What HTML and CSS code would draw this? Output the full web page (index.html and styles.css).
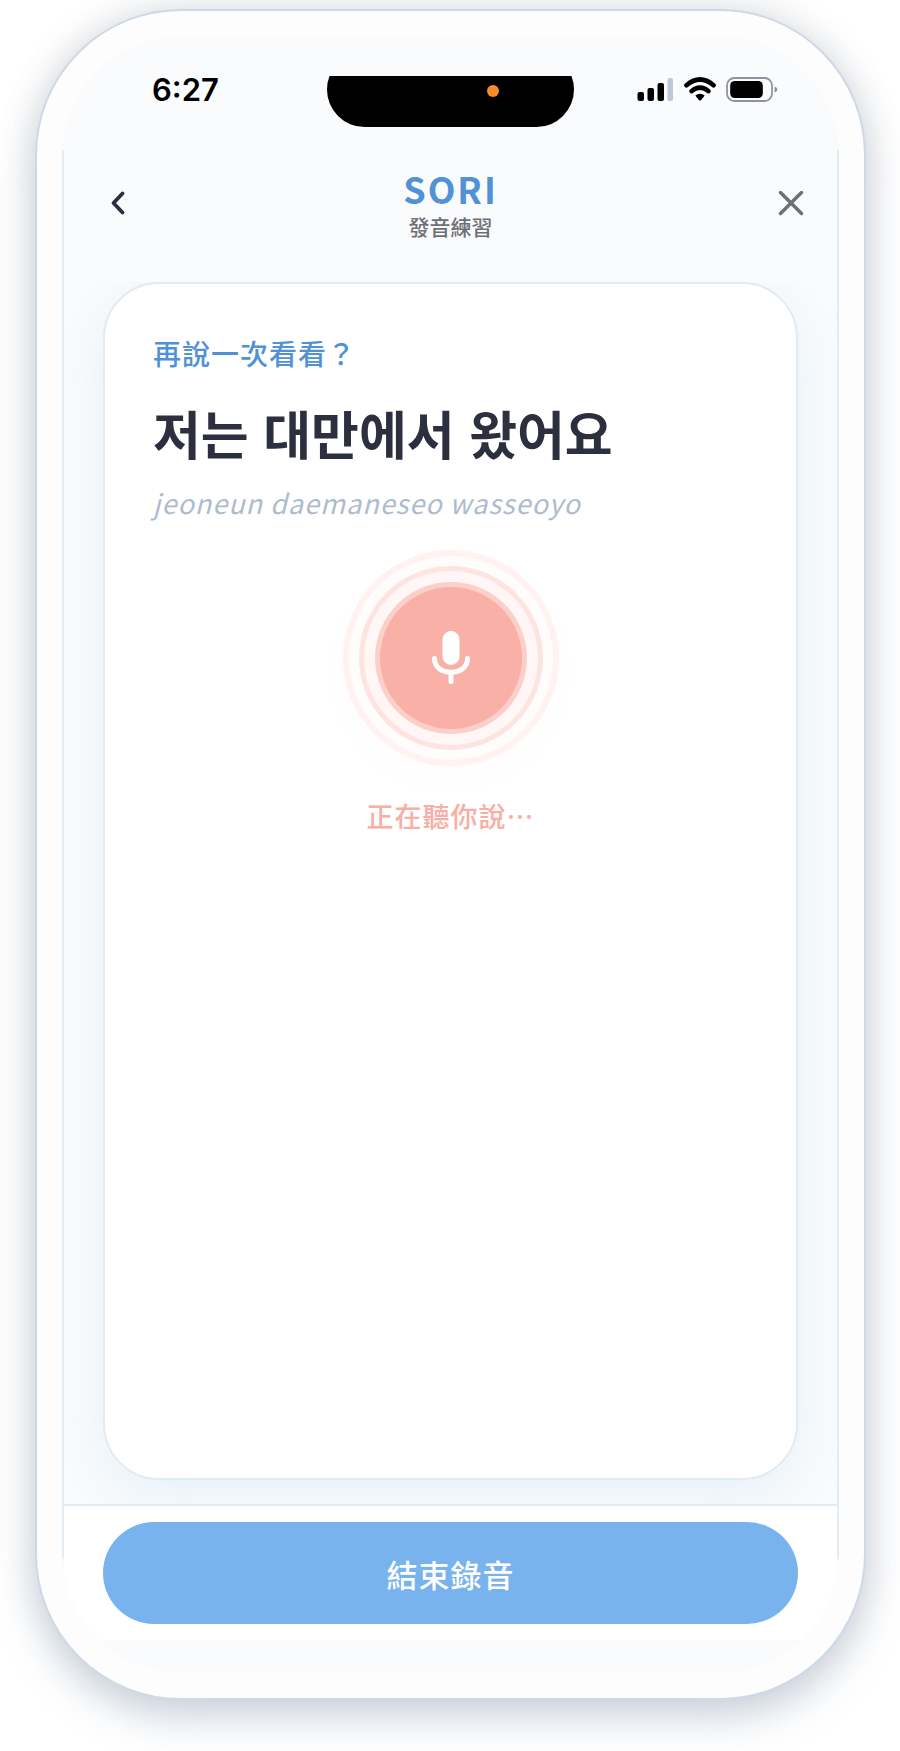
FILE: index.html
```
<!DOCTYPE html>
<html lang="zh-Hant">
	<head>
		<meta charset="UTF-8">
		<meta name="viewport" content="width=device-width, initial-scale=1">
		<title>SORI 發音練習</title>
		<link rel="stylesheet" href="styles.css">
	</head>
	<body>
		<div class="phone">
			<div class="screen">
				<div class="status-bar">
					<span class="time">6:27</span>
					<div class="island"><span class="dot"></span></div>
					<svg class="status-icons" width="142" height="28" viewBox="0 0 142 28" aria-hidden="true">
						<!-- signal -->
						<rect x="0.5" y="16" width="6.5" height="9" rx="2"/>
						<rect x="10.5" y="12" width="6.5" height="13" rx="2"/>
						<rect x="20.5" y="7" width="6.5" height="18" rx="2"/>
						<rect x="30.5" y="2" width="5.5" height="23" rx="2" fill="#bdc9d8"/>
						<!-- wifi -->
						<g fill="none" stroke="#000">
							<path d="M49.5 9.2 Q63 -2.2 76.5 9.2" stroke-width="4.6"/>
							<path d="M54.4 15.2 Q63 8 71.6 15.2" stroke-width="4.4"/>
						</g>
						<path d="M58.3 19.5 Q63 15.8 67.7 19.5 L64.2 23.9 Q63 25.3 61.8 23.9 Z"/>
						<!-- battery -->
						<rect x="90" y="2" width="45" height="23" rx="7.5" fill="none" stroke="#8e949e" stroke-width="1.8"/>
						<rect x="93.2" y="5" width="32.6" height="17" rx="4.5"/>
						<path d="M137.5 10.5 Q140.4 11.5 140.4 13.5 T137.5 16.5 Z" fill="#8e949e"/>
					</svg>
				</div>
				<header class="top-bar">
					<button class="icon-btn" type="button" aria-label="返回">
						<svg width="40" height="28" viewBox="0 0 40 28" fill="none"><path d="M32.5 4.5 L23.5 14 L32.5 23.5" stroke="#2b2f3e" stroke-width="3.8"/></svg>
					</button>
					<div class="brand">
						<h1>SORI</h1>
						<p>發音練習</p>
					</div>
					<button class="icon-btn" type="button" aria-label="關閉">
						<svg width="28" height="28" viewBox="0 0 28 28" fill="none"><path d="M3.5 3.5 L24.5 24.5 M24.5 3.5 L3.5 24.5" stroke="#6e6f76" stroke-width="3.5"/></svg>
					</button>
				</header>
				<main class="content">
					<section class="card">
						<p class="prompt">再說一次看看？</p>
						<h2 class="sentence" lang="ko">저는 대만에서 왔어요</h2>
						<p class="roman">jeoneun daemaneseo wasseoyo</p>
						<button class="mic" type="button" aria-label="錄音中">
							<svg width="40" height="56" viewBox="0 0 40 56" fill="none">
								<rect x="11.5" y="1" width="17" height="34" rx="8.5" fill="#fff"/>
								<path d="M3.5 28.5 C3.5 37.5 11 42.3 20 42.3 C29 42.3 36.5 37.5 36.5 28.5 M20 42.5 V51.5" stroke="#fff" stroke-width="5"/>
							</svg>
						</button>
						<p class="listening" role="status">正在聽你說⋯</p>
					</section>
				</main>
				<footer class="bottom-bar">
					<button class="stop-btn" type="button">結束錄音</button>
				</footer>
			</div>
		</div>
	</body>
</html>
```
FILE: styles.css
```
* {
	box-sizing: border-box;
}
body {
	margin: 0;
	min-height: 100vh;
	padding: 9px 34px 51px 35px;
	display: flex;
	background-color: #fff;
	font-family: "Noto Sans CJK TC", sans-serif;
	color: #2b2f3e;
}
h1, h2, p {
	margin: 0;
}
button {
	padding: 0;
	border: none;
	background: none;
	font-family: inherit;
	cursor: pointer;
}
svg path {
	stroke-linecap: round;
	stroke-linejoin: round;
}

/* 手機外框 */
.phone {
	flex: 1;
	display: flex;
	padding: 25px;
	border: 2px solid #cfd9e6;
	border-radius: 146px;
	background-color: #fdfdfd;
	box-shadow: 0 20px 40px rgba(130, 150, 180, 0.3), 0 0 36px rgba(90, 100, 110, 0.2);
}
/* 左右邊線只畫在直線部分 */
.screen {
	flex: 1;
	display: flex;
	flex-direction: column;
	padding: 40px 2px 33px;
	border-radius: 120px;
	background:
		linear-gradient(#e2ecf3, #e2ecf3) left center / 2px calc(100% - 228px) no-repeat,
		linear-gradient(#e2ecf3, #e2ecf3) right center / 2px calc(100% - 228px) no-repeat,
		#f9fbfd;
	overflow: hidden;
}

/* 狀態列 */
.status-bar {
	position: relative;
	display: flex;
	justify-content: space-between;
	height: 54px;
	padding: 0 58px 0 88px;
}
.time {
	font: 600 31px/28px Inter, sans-serif;
	color: #000;
}
.island {
	position: absolute;
	left: 50%;
	top: 0;
	width: 247px;
	height: 51px;
	margin-left: -124px;
	overflow: hidden;
}
.island::before {
	content: "";
	position: absolute;
	left: 0;
	right: 0;
	bottom: 0;
	height: 75px;
	border-radius: 38px;
	background-color: #000;
}
.island .dot {
	position: absolute;
	right: 75px;
	bottom: 30px;
	width: 12px;
	height: 12px;
	border-radius: 50%;
	background-color: #f68b2c;
}

/* 標題 */
.top-bar {
	display: flex;
	justify-content: space-between;
	align-items: center;
	height: 152px;
	padding: 0 26px 6px;
}
.icon-btn {
	display: flex;
	width: 40px;
	height: 40px;
	align-items: center;
	justify-content: center;
}
.brand {
	padding-top: 4px;
	text-align: center;
}
.brand h1 {
	font-size: 36px;
	line-height: 42px;
	font-weight: 700;
	letter-spacing: 2px;
	color: #5092d5;
}
.brand p {
	font-size: 21px;
	line-height: 35px;
	font-weight: 500;
	color: #6e6f76;
}

/* 卡片 */
.content {
	flex: 1;
	display: flex;
	padding: 0 39px 24px;
	overflow: hidden;
}
.card {
	flex: 1;
	display: flex;
	flex-direction: column;
	padding: 49px 48px;
	border: 2px solid #e1ebf3;
	border-radius: 56px;
	background-color: #fff;
	box-shadow: 0 16px 48px rgba(190, 220, 235, 0.28);
}
.prompt {
	font-size: 28px;
	line-height: 40px;
	font-weight: 500;
	letter-spacing: 1px;
	color: #5092d5;
}
.sentence {
	margin-top: 20px;
	font-family: "Noto Sans CJK KR", sans-serif;
	font-size: 52px;
	line-height: 80px;
	font-weight: 700;
}
.roman {
	margin-top: 8px;
	font-size: 27px;
	line-height: 44px;
	font-style: italic;
	letter-spacing: 1px;
	color: #adbccd;
}
.mic {
	display: flex;
	align-items: center;
	justify-content: center;
	align-self: center;
	width: 142px;
	height: 142px;
	margin-top: 62px;
	border-radius: 50%;
	background-color: #f9b0a6;
	box-shadow:
		0 0 0 5px #fcd0ca,
		0 0 0 16px #fff6f5,
		0 0 0 21px #fde4e0,
		0 0 0 31px #fffcfc,
		0 0 0 37px #fff2f1,
		0 14px 44px 10px rgba(249, 176, 166, 0.16);
}
.listening {
	margin-top: 67px;
	text-align: center;
	font-size: 27px;
	line-height: 40px;
	font-weight: 500;
	letter-spacing: 1px;
	color: #f9aea4;
}

/* 底部按鈕 */
.bottom-bar {
	padding: 16px 39px;
	border-top: 2px solid #e3ebf3;
	background-color: #fff;
}
.stop-btn {
	display: block;
	width: 100%;
	height: 102px;
	border-radius: 51px;
	background-color: #78b3ee;
	color: #fff;
	font-size: 31px;
	font-weight: 500;
	letter-spacing: 1px;
}
```
